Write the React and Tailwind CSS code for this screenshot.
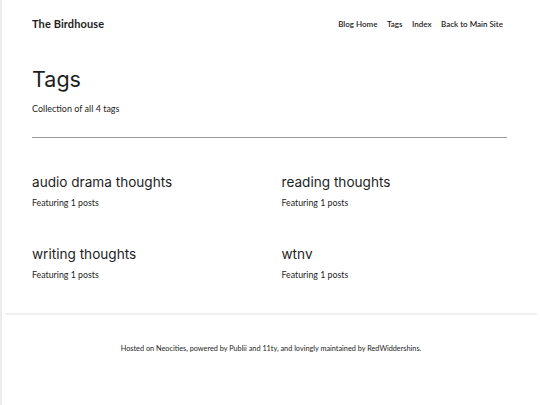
import React from 'react';

const tags = [
  { name: 'audio drama thoughts', count: 1 },
  { name: 'reading thoughts', count: 1 },
  { name: 'writing thoughts', count: 1 },
  { name: 'wtnv', count: 1 },
];

const App = () => {
  return (
    <div className="min-h-[405px] w-[540px] bg-white border-l-2 border-[#ececec] text-[#1e1e1e] font-['Lato',sans-serif]">
      <header className="flex items-center justify-between pl-[30px] pr-[37px] pt-[9px] h-[39px]">
        <a className="text-[11px] font-bold tracking-[0.1px]">The Birdhouse</a>
        <nav className="flex gap-[9.5px] text-[8px] font-semibold">
          <a>Blog Home</a>
          <a>Tags</a>
          <a>Index</a>
          <a>Back to Main Site</a>
        </nav>
      </header>

      <main className="px-[30px] pt-[25px]">
        <h1 className="font-['Inter',sans-serif] text-[21.5px] leading-[30px]">Tags</h1>
        <p className="mt-[8px] text-[9px]">Collection of all {tags.length} tags</p>
        <hr className="mt-[21px] mr-[3px] border-0 h-[1.5px] bg-[#9a9a9a]" />

        <div className="grid grid-cols-2 gap-x-[21px] gap-y-[36px] pt-[35px] pb-[32px]">
          {tags.map((tag) => (
            <div key={tag.name}>
              <h2 className="font-['Inter',sans-serif] text-[13.6px] leading-[18px]">{tag.name}</h2>
              <p className="mt-[5px] text-[8.8px]">Featuring {tag.count} posts</p>
            </div>
          ))}
        </div>
      </main>

      <footer className="mx-[3px] border-t-2 border-[#f1f1f1] pt-[29px] pb-[50px] text-center text-[7.3px]">
        Hosted on Neocities, powered by Publii and 11ty, and lovingly maintained by RedWiddershins.
      </footer>
    </div>
  );
};

export default App;
